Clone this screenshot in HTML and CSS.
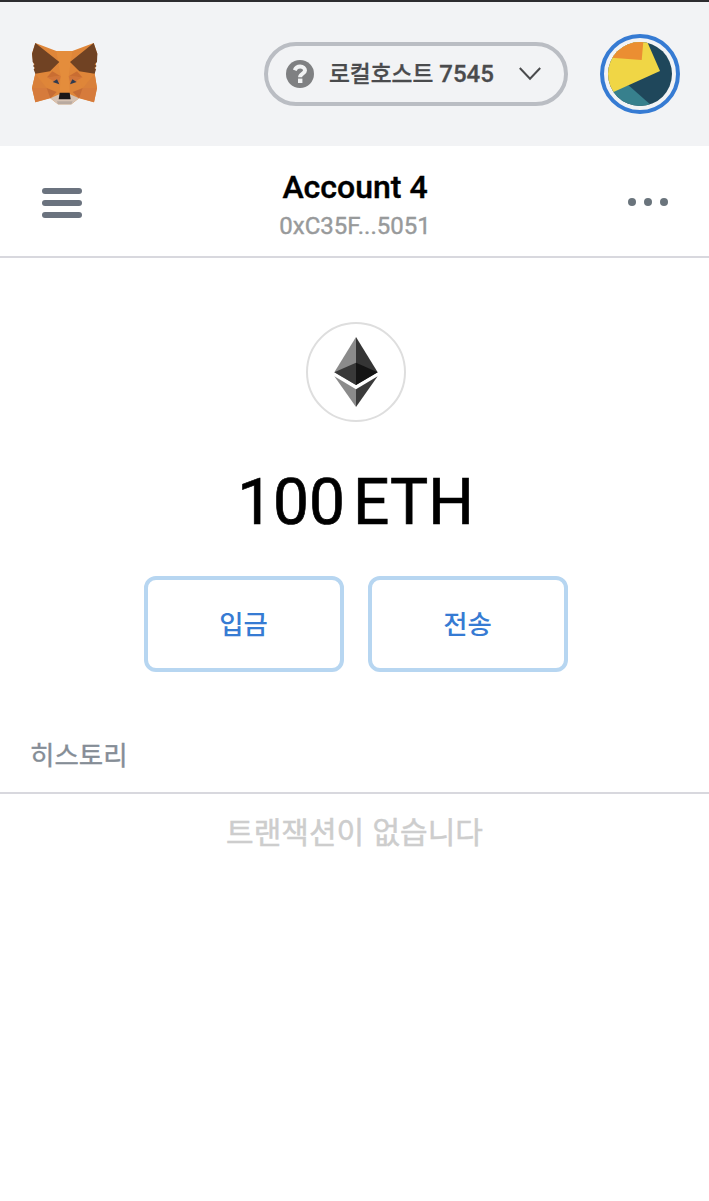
FILE: index.html
```html
<!DOCTYPE html>
<html lang="ko">
<head>
<meta charset="utf-8">
<title>MetaMask</title>
<link rel="stylesheet" href="styles.css">
</head>
<body>
<header class="app-header">
  <svg class="fox" viewBox="0 0 252 240">
    <path fill="#df8639" d="M34 27L97 51H145L209 27L220 59L212 119L219 162L210 205L165 193L142 211H102L79 193L34 205L24 162L34 119L24 59Z"/>
    <path fill="#d9803a" d="M34 119L73 126L68 162H24Z"/>
    <path fill="#d9803a" d="M212 119L171 126L176 162H219Z"/>
    <path fill="#df8639" d="M34 119L85 111L68 162Z"/>
    <path fill="#df8639" d="M212 119L160 111L176 162Z"/>
    <path fill="#d67b3c" d="M24 162H68L85 190L34 205Z"/>
    <path fill="#d67b3c" d="M219 162H176L160 190L210 205Z"/>
    <path fill="#c56c35" d="M68 162L98 174L79 193Z"/>
    <path fill="#c56c35" d="M176 162L146 174L165 193Z"/>
    <path fill="#e48d3c" d="M97 51H145L134 126L137 176H107L110 126Z"/>
    <path fill="#c96d32" d="M85 112L110 127L69 130Z"/>
    <path fill="#c96d32" d="M159 112L134 127L175 130Z"/>
    <path fill="#d1753a" d="M69 130L110 127L104 151Z"/>
    <path fill="#d1753a" d="M175 130L134 127L140 151Z"/>
    <path fill="#704223" d="M34 27L106 84L78 112L34 119L29 106L33 102L27 96L32 91L26 84L24 59Z"/>
    <path fill="#704223" d="M209 27L138 84L166 112L212 119L216 106L211 102L218 96L212 91L219 84L220 59Z"/>
    <path fill="#d6c2b3" d="M79 193L106 181H138L165 193L142 211H102Z"/>
    <path fill="#b9aaa0" d="M99 202H146L142 211H102Z"/>
    <path fill="#1b1818" d="M107 176H137L140 196H104Z"/>
    <path fill="#303b50" d="M86 144L99 136L106 151Z"/>
    <path fill="#303b50" d="M158 144L145 136L138 151Z"/>
  </svg>
  <div class="network">
    <svg class="help" viewBox="0 0 28 28">
      <circle cx="14" cy="14" r="14" fill="#7f8082"/>
      <path fill="none" stroke="#f2f3f4" stroke-width="4" d="M8.7 10.2C9.8 7.7 11.3 6.6 14.1 6.6C17.1 6.6 19 8.2 19 10.6C19 13.9 14.1 13.5 14.1 17.2"/>
      <path fill="#f2f3f4" d="M12 18.6H16.4V23H12Z"/>
    </svg>
    <span class="network-name"><span class="ko">로컬호스트</span> 7545</span>
    <svg class="chevron" viewBox="0 0 22 14"><path fill="none" stroke="#4a4b4d" stroke-width="2" d="M.8 1L11 11.7L21.2 1"/></svg>
  </div>
  <svg class="avatar" viewBox="0 0 80 80">
    <defs><clipPath id="disc"><circle cx="40" cy="40" r="32"/></clipPath></defs>
    <circle cx="40" cy="40" r="38" fill="#f2f3f5" stroke="#367bd3" stroke-width="4"/>
    <g clip-path="url(#disc)">
      <path fill="#1f475b" d="M0 0H80V80H0Z"/>
      <path fill="#37808d" d="M0 60L28.5 51.3L52 72V80H0Z"/>
      <path fill="#f0d645" d="M0 0H43L47.5 8.5L60 37L0 64Z"/>
      <path fill="#eb8e32" d="M0 0H44L41.7 26L0 23Z"/>
    </g>
  </svg>
</header>
<section class="account-bar">
  <div class="burger"><i></i><i></i><i></i></div>
  <div class="account">
    <div class="account-name">Account 4</div>
    <div class="address">0xC35F...5051</div>
  </div>
  <div class="dots"><i></i><i></i><i></i></div>
</section>
<main>
  <section class="overview">
    <div class="token">
      <svg viewBox="0 0 130 210">
        <path fill="#8b8b8b" d="M65 0V144L0 106Z"/>
        <path fill="#353535" d="M65 0V144L130 106Z"/>
        <path fill="#393939" d="M65 77V144L0 106Z"/>
        <path fill="#141414" d="M65 77V144L130 106Z"/>
        <path fill="#8b8b8b" d="M0 118L65 157V210Z"/>
        <path fill="#3b3b3b" d="M130 118L65 157V210Z"/>
      </svg>
    </div>
    <div class="balance"><span>100</span><span>ETH</span></div>
    <div class="actions">
      <button class="action">입금</button>
      <button class="action">전송</button>
    </div>
  </section>
  <h2 class="history-title">히스토리</h2>
  <p class="empty">트랜잭션이 없습니다</p>
</main>
</body>
</html>
```
FILE: styles.css
```css
* { box-sizing: border-box; }
body {
  margin: 0;
  height: 1201px;
  overflow: hidden;
  background: #fff;
  font-family: Roboto, "Noto Sans CJK KR", sans-serif;
}
.app-header {
  display: flex;
  align-items: center;
  height: 146px;
  padding: 0 29px 0 24px;
  border-top: 2px solid #2d2d2f;
  background: #f2f3f5;
}
.fox { width: 84px; height: 80px; }
.network {
  display: flex;
  align-items: center;
  width: 304px;
  height: 64px;
  margin-left: auto;
  padding: 0 23px 0 18px;
  border: 4px solid #babdc3;
  border-radius: 32px;
}
.help { width: 28px; height: 28px; }
.network-name {
  margin-left: 15px;
  color: #4a4b4d;
  font-size: 24px;
  font-weight: 500;
  line-height: 32px;
  white-space: nowrap;
  -webkit-text-stroke: 0.3px currentColor;
}
.ko { font-size: 22.7px; }
.chevron { width: 22px; height: 14px; margin-left: auto; }
.avatar { width: 80px; height: 80px; margin-left: 32px; }
.account-bar {
  display: flex;
  justify-content: space-between;
  height: 112px;
  padding: 0 41px 0 42px;
  border-bottom: 2px solid #d8d8de;
}
.burger { display: flex; flex-direction: column; gap: 6px; width: 40px; padding-top: 42px; }
.burger i { height: 6px; border-radius: 3px; background: #6b737f; }
.account { padding-top: 23px; text-align: center; }
.account-name { color: #000; font-size: 32px; font-weight: 500; line-height: 36px; -webkit-text-stroke: 0.4px currentColor; }
.address { margin-top: 6px; color: #989a9b; font-size: 24px; line-height: 30px; -webkit-text-stroke: 0.4px currentColor; }
.dots { display: flex; gap: 8px; padding-top: 52px; }
.dots i { width: 8px; height: 8px; border-radius: 50%; background: #6a747c; }
.overview {
  display: flex;
  flex-direction: column;
  align-items: center;
  padding: 64px 0 0 2px;
}
.token {
  display: flex;
  align-items: center;
  justify-content: center;
  width: 100px;
  height: 100px;
  border: 2px solid #dedede;
  border-radius: 50%;
}
.token svg { width: 44px; height: 70px; }
.balance {
  display: flex;
  gap: 8px;
  margin: 43px 0 0 0;
  color: #000;
  font-size: 64px;
  line-height: 76px;
  -webkit-text-stroke: 0.7px currentColor;
}
.actions { display: flex; gap: 24px; margin-top: 35px; }
.action {
  width: 200px;
  height: 96px;
  padding: 0 0 4px;
  border: 4px solid #b7d6f1;
  border-radius: 12px;
  background: #fff;
  color: #367bd3;
  font: 500 26.4px "Noto Sans CJK KR", sans-serif;
}
.history-title {
  height: 122px;
  margin: 0;
  padding: 62px 0 0 30px;
  border-bottom: 2px solid #d8d8de;
  color: #858d96;
  font: 400 26.5px/40px "Noto Sans CJK KR", sans-serif;
  -webkit-text-stroke: 0.4px currentColor;
}
.empty {
  margin: 15px 0 0;
  color: #cdcdcd;
  text-align: center;
  font: 400 30px/42px "Noto Sans CJK KR", sans-serif;
  -webkit-text-stroke: 0.5px currentColor;
}
```
